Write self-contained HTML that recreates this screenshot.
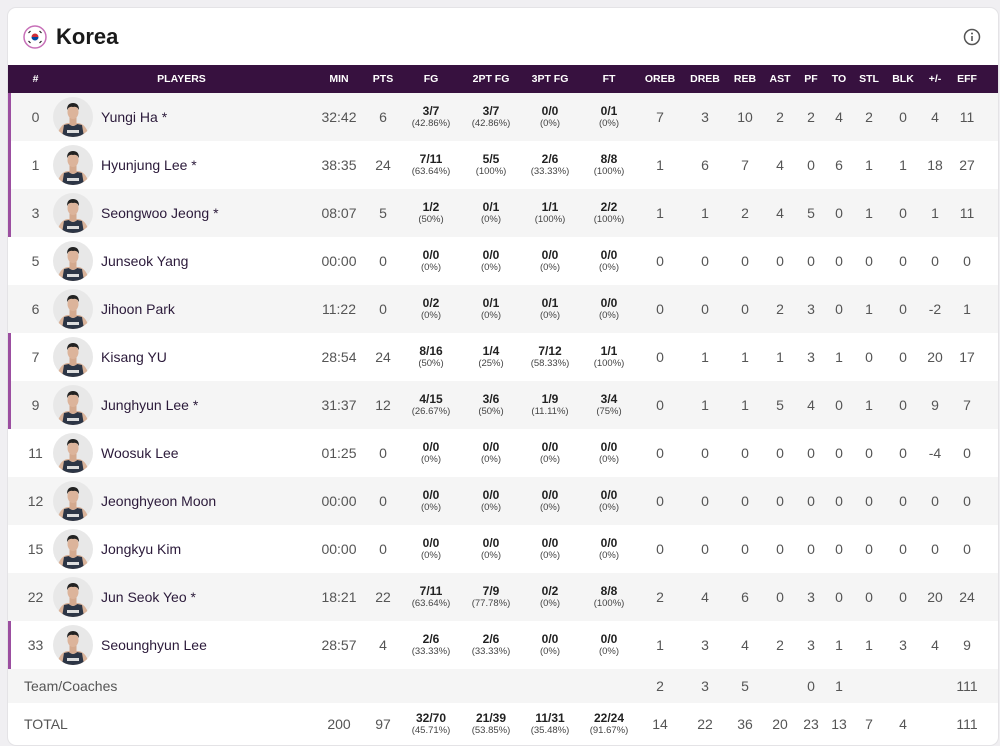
<!DOCTYPE html>
<html><head><meta charset="utf-8"><style>
body{margin:0;background:#f0eff2;font-family:"Liberation Sans",sans-serif;width:1000px;height:746px;overflow:hidden}
.card{position:absolute;left:8px;top:8px;width:990px;height:737px;background:#fff;border-radius:8px;box-shadow:0 0 0 1px #e4e3e6}
.title{position:absolute;left:48px;top:16px;font-size:22px;font-weight:bold;color:#1a1a1a}
table{position:absolute;left:0;top:57px;border-collapse:collapse;table-layout:fixed;width:990px}
th{background:#37113f;color:#fff;font-size:10.5px;font-weight:bold;height:28px;padding:0;text-align:center}
td{padding:0;text-align:center;font-size:14px;color:#555;height:48px}
tr.g td{background:#f5f5f5}
td.n{text-align:center;padding-left:10px;position:relative}
td.n.b{box-shadow:inset 3px 0 0 #9b4ea0}
td.p{text-align:left}
td.p svg{vertical-align:middle;margin-right:8px}
td.p span{vertical-align:middle;color:#2b1a3a;font-size:14px}
.f b{display:block;font-size:12px;color:#222;line-height:13px}
.f i{display:block;font-style:normal;font-size:9.5px;color:#444;line-height:11px}
tr.t td{height:34px}
tr.tt td{height:42px}
</style></head><body>
<svg width="0" height="0" style="position:absolute"><defs><symbol id="av" viewBox="0 0 40 40"><circle cx="20" cy="20" r="20" fill="#e8e8e8"/><clipPath id="c"><circle cx="20" cy="20" r="20"/></clipPath><g clip-path="url(#c)"><path d="M4 40 Q6 28 14 26 L26 26 Q34 28 36 40Z" fill="#d9b39a"/><path d="M9 40 L11 28 L16 27 Q20 31 24 27 L29 28 L31 40Z" fill="#2c3545"/><rect x="14" y="33" width="12" height="3" fill="#ddd"/><rect x="16.5" y="20" width="7" height="8" fill="#d4a98e"/><ellipse cx="20" cy="15" rx="5.5" ry="7" fill="#dcb49b"/><path d="M14 13 Q14 6 20 6 Q26 6 26 13 Q24 9 20 10 Q16 9 14 13Z" fill="#222"/></g></symbol></defs></svg>
<div class="card">
<svg style="position:absolute;left:15px;top:17px" width="24" height="24" viewBox="0 0 24 24"><circle cx="12" cy="12" r="11" fill="#fff" stroke="#c770b8" stroke-width="1.5"/><path d="M8.5 12a3.5 3.5 0 0 1 7 0" fill="#cd2e3a"/><path d="M8.5 12a3.5 3.5 0 0 0 7 0" fill="#0047a0"/><g stroke="#222" stroke-width="1.2"><path d="M5.5 8l2 -2M16.5 6l2 2M5.5 16l2 2M16.5 18l2 -2"/></g></svg>
<div class="title">Korea</div>
<svg style="position:absolute;left:955px;top:20px" width="18" height="18" viewBox="0 0 18 18"><circle cx="9" cy="9" r="7.5" fill="none" stroke="#555" stroke-width="1.5"/><circle cx="9" cy="5.5" r="1" fill="#555"/><path d="M9 8v5" stroke="#555" stroke-width="1.6"/></svg>
<table>
<colgroup><col style="width:45px"><col style="width:257px"><col style="width:58px"><col style="width:30px"><col style="width:66px"><col style="width:54px"><col style="width:64px"><col style="width:54px"><col style="width:48px"><col style="width:42px"><col style="width:38px"><col style="width:32px"><col style="width:30px"><col style="width:26px"><col style="width:34px"><col style="width:34px"><col style="width:30px"><col style="width:34px"><col style="width:14px"></colgroup>
<tr><th style="padding-left:10px">#</th><th>PLAYERS</th><th>MIN</th><th>PTS</th><th>FG</th><th>2PT FG</th><th>3PT FG</th><th>FT</th><th>OREB</th><th>DREB</th><th>REB</th><th>AST</th><th>PF</th><th>TO</th><th>STL</th><th>BLK</th><th>+/-</th><th>EFF</th><th></th></tr>
<tr class="g"><td class="n b">0</td><td class="p"><svg width="40" height="40"><use href="#av"/></svg><span>Yungi Ha *</span></td><td>32:42</td><td>6</td><td class="f"><b>3/7</b><i>(42.86%)</i></td><td class="f"><b>3/7</b><i>(42.86%)</i></td><td class="f"><b>0/0</b><i>(0%)</i></td><td class="f"><b>0/1</b><i>(0%)</i></td><td>7</td><td>3</td><td>10</td><td>2</td><td>2</td><td>4</td><td>2</td><td>0</td><td>4</td><td>11</td><td></td></tr>
<tr><td class="n b">1</td><td class="p"><svg width="40" height="40"><use href="#av"/></svg><span>Hyunjung Lee *</span></td><td>38:35</td><td>24</td><td class="f"><b>7/11</b><i>(63.64%)</i></td><td class="f"><b>5/5</b><i>(100%)</i></td><td class="f"><b>2/6</b><i>(33.33%)</i></td><td class="f"><b>8/8</b><i>(100%)</i></td><td>1</td><td>6</td><td>7</td><td>4</td><td>0</td><td>6</td><td>1</td><td>1</td><td>18</td><td>27</td><td></td></tr>
<tr class="g"><td class="n b">3</td><td class="p"><svg width="40" height="40"><use href="#av"/></svg><span>Seongwoo Jeong *</span></td><td>08:07</td><td>5</td><td class="f"><b>1/2</b><i>(50%)</i></td><td class="f"><b>0/1</b><i>(0%)</i></td><td class="f"><b>1/1</b><i>(100%)</i></td><td class="f"><b>2/2</b><i>(100%)</i></td><td>1</td><td>1</td><td>2</td><td>4</td><td>5</td><td>0</td><td>1</td><td>0</td><td>1</td><td>11</td><td></td></tr>
<tr><td class="n">5</td><td class="p"><svg width="40" height="40"><use href="#av"/></svg><span>Junseok Yang</span></td><td>00:00</td><td>0</td><td class="f"><b>0/0</b><i>(0%)</i></td><td class="f"><b>0/0</b><i>(0%)</i></td><td class="f"><b>0/0</b><i>(0%)</i></td><td class="f"><b>0/0</b><i>(0%)</i></td><td>0</td><td>0</td><td>0</td><td>0</td><td>0</td><td>0</td><td>0</td><td>0</td><td>0</td><td>0</td><td></td></tr>
<tr class="g"><td class="n">6</td><td class="p"><svg width="40" height="40"><use href="#av"/></svg><span>Jihoon Park</span></td><td>11:22</td><td>0</td><td class="f"><b>0/2</b><i>(0%)</i></td><td class="f"><b>0/1</b><i>(0%)</i></td><td class="f"><b>0/1</b><i>(0%)</i></td><td class="f"><b>0/0</b><i>(0%)</i></td><td>0</td><td>0</td><td>0</td><td>2</td><td>3</td><td>0</td><td>1</td><td>0</td><td>-2</td><td>1</td><td></td></tr>
<tr><td class="n b">7</td><td class="p"><svg width="40" height="40"><use href="#av"/></svg><span>Kisang YU</span></td><td>28:54</td><td>24</td><td class="f"><b>8/16</b><i>(50%)</i></td><td class="f"><b>1/4</b><i>(25%)</i></td><td class="f"><b>7/12</b><i>(58.33%)</i></td><td class="f"><b>1/1</b><i>(100%)</i></td><td>0</td><td>1</td><td>1</td><td>1</td><td>3</td><td>1</td><td>0</td><td>0</td><td>20</td><td>17</td><td></td></tr>
<tr class="g"><td class="n b">9</td><td class="p"><svg width="40" height="40"><use href="#av"/></svg><span>Junghyun Lee *</span></td><td>31:37</td><td>12</td><td class="f"><b>4/15</b><i>(26.67%)</i></td><td class="f"><b>3/6</b><i>(50%)</i></td><td class="f"><b>1/9</b><i>(11.11%)</i></td><td class="f"><b>3/4</b><i>(75%)</i></td><td>0</td><td>1</td><td>1</td><td>5</td><td>4</td><td>0</td><td>1</td><td>0</td><td>9</td><td>7</td><td></td></tr>
<tr><td class="n">11</td><td class="p"><svg width="40" height="40"><use href="#av"/></svg><span>Woosuk Lee</span></td><td>01:25</td><td>0</td><td class="f"><b>0/0</b><i>(0%)</i></td><td class="f"><b>0/0</b><i>(0%)</i></td><td class="f"><b>0/0</b><i>(0%)</i></td><td class="f"><b>0/0</b><i>(0%)</i></td><td>0</td><td>0</td><td>0</td><td>0</td><td>0</td><td>0</td><td>0</td><td>0</td><td>-4</td><td>0</td><td></td></tr>
<tr class="g"><td class="n">12</td><td class="p"><svg width="40" height="40"><use href="#av"/></svg><span>Jeonghyeon Moon</span></td><td>00:00</td><td>0</td><td class="f"><b>0/0</b><i>(0%)</i></td><td class="f"><b>0/0</b><i>(0%)</i></td><td class="f"><b>0/0</b><i>(0%)</i></td><td class="f"><b>0/0</b><i>(0%)</i></td><td>0</td><td>0</td><td>0</td><td>0</td><td>0</td><td>0</td><td>0</td><td>0</td><td>0</td><td>0</td><td></td></tr>
<tr><td class="n">15</td><td class="p"><svg width="40" height="40"><use href="#av"/></svg><span>Jongkyu Kim</span></td><td>00:00</td><td>0</td><td class="f"><b>0/0</b><i>(0%)</i></td><td class="f"><b>0/0</b><i>(0%)</i></td><td class="f"><b>0/0</b><i>(0%)</i></td><td class="f"><b>0/0</b><i>(0%)</i></td><td>0</td><td>0</td><td>0</td><td>0</td><td>0</td><td>0</td><td>0</td><td>0</td><td>0</td><td>0</td><td></td></tr>
<tr class="g"><td class="n">22</td><td class="p"><svg width="40" height="40"><use href="#av"/></svg><span>Jun Seok Yeo *</span></td><td>18:21</td><td>22</td><td class="f"><b>7/11</b><i>(63.64%)</i></td><td class="f"><b>7/9</b><i>(77.78%)</i></td><td class="f"><b>0/2</b><i>(0%)</i></td><td class="f"><b>8/8</b><i>(100%)</i></td><td>2</td><td>4</td><td>6</td><td>0</td><td>3</td><td>0</td><td>0</td><td>0</td><td>20</td><td>24</td><td></td></tr>
<tr><td class="n b">33</td><td class="p"><svg width="40" height="40"><use href="#av"/></svg><span>Seounghyun Lee</span></td><td>28:57</td><td>4</td><td class="f"><b>2/6</b><i>(33.33%)</i></td><td class="f"><b>2/6</b><i>(33.33%)</i></td><td class="f"><b>0/0</b><i>(0%)</i></td><td class="f"><b>0/0</b><i>(0%)</i></td><td>1</td><td>3</td><td>4</td><td>2</td><td>3</td><td>1</td><td>1</td><td>3</td><td>4</td><td>9</td><td></td></tr>
<tr class="g t"><td colspan="2" style="text-align:left;padding-left:16px">Team/Coaches</td><td></td><td></td><td></td><td></td><td></td><td></td><td>2</td><td>3</td><td>5</td><td></td><td>0</td><td>1</td><td></td><td></td><td></td><td>111</td><td></td></tr>
<tr class="tt"><td colspan="2" style="text-align:left;padding-left:16px">TOTAL</td><td>200</td><td>97</td><td class="f"><b>32/70</b><i>(45.71%)</i></td><td class="f"><b>21/39</b><i>(53.85%)</i></td><td class="f"><b>11/31</b><i>(35.48%)</i></td><td class="f"><b>22/24</b><i>(91.67%)</i></td><td>14</td><td>22</td><td>36</td><td>20</td><td>23</td><td>13</td><td>7</td><td>4</td><td></td><td>111</td><td></td></tr>
</table>
</div>
</body></html>
